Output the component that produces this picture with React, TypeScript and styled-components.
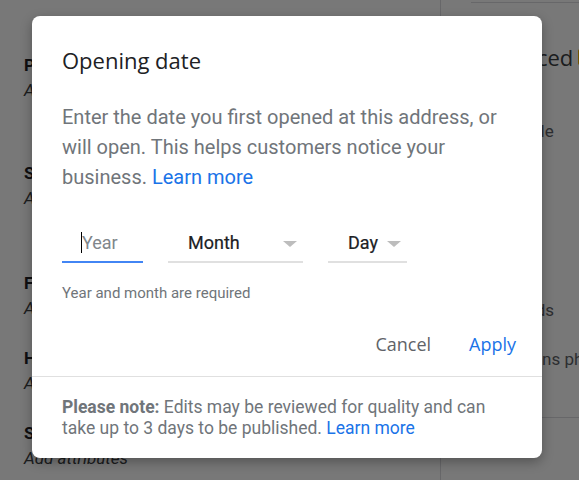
import React from 'react'
import styled, { createGlobalStyle } from 'styled-components'

const BLUE = '#1a73e8'
const GREY_TEXT = '#70757a'
const DARK = '#202124'
const LINE = '#e0e0e0'

const GlobalStyle = createGlobalStyle`
  html, body {
    margin: 0;
    padding: 0;
    background: #fff;
  }
  body {
    font-family: Roboto, "Liberation Sans", sans-serif;
  }
`

const Page = styled.div`
  position: relative;
  width: 579px;
  height: 480px;
  overflow: hidden;
  display: grid;
  grid-template-columns: 440px 1fr;
  background: #fff;
`

const LeftColumn = styled.div`
  padding: 53px 0 0 24px;
`

const Section = styled.div<{ $gap: number }>`
  margin-top: ${({ $gap }) => $gap}px;
  font-size: 17px;
  line-height: 25px;
`

const SectionLabel = styled.div`
  font-weight: 700;
  color: ${DARK};
`

const SectionValue = styled.div`
  font-style: italic;
  color: #3c4043;
`

const RightColumn = styled.div`
  border-left: 1px solid #dadce0;
  display: flex;
  flex-direction: column;
  white-space: nowrap;
  color: #5f6368;
`

const TopRule = styled.div`
  margin: 2px 0 0 30px;
  border-top: 1px solid #dadce0;
`

const PanelHeading = styled.div`
  margin: 39px 0 0 31px;
  font-family: 'Open Sans', sans-serif;
  font-size: 22px;
  line-height: 30px;
  color: #3c4043;
  display: flex;
  align-items: center;
  gap: 5px;
`

const Badge = styled.span`
  width: 8px;
  height: 16px;
  background: #f4b400;
  border-radius: 2px;
`

const PanelItem = styled.div<{ $gap: number; $indent: number }>`
  margin: ${({ $gap }) => $gap}px 0 0 ${({ $indent }) => $indent}px;
  font-size: 17px;
  line-height: 22px;
`

const BottomRule = styled.div`
  margin-top: 47px;
  border-top: 1px solid #dadce0;
`

const Overlay = styled.div`
  position: absolute;
  inset: 0;
  background: rgba(0, 0, 0, 0.53);
`

const Dialog = styled.div`
  position: absolute;
  left: 32px;
  top: 16px;
  width: 510px;
  height: 442px;
  box-sizing: border-box;
  background: #fff;
  border-radius: 8px;
  box-shadow: 0 4px 12px rgba(0, 0, 0, 0.3);
  display: flex;
  flex-direction: column;
  overflow: hidden;
`

const Body = styled.div`
  padding: 30px 30px 0;
`

const Title = styled.h2`
  margin: 0;
  font-family: 'Open Sans', sans-serif;
  font-weight: 400;
  font-size: 22px;
  line-height: 28px;
  color: ${DARK};
`

const Description = styled.p`
  margin: 28px 0 0;
  font-size: 20px;
  line-height: 30px;
  color: ${GREY_TEXT};
`

const Link = styled.a`
  color: ${BLUE};
  text-decoration: none;
`

const Fields = styled.div`
  margin-top: 31px;
  display: flex;
  gap: 25px;
`

const Field = styled.div<{ $width: number; $active?: boolean }>`
  width: ${({ $width }) => $width}px;
  height: 40px;
  box-sizing: border-box;
  padding: 0 6px 0 20px;
  display: flex;
  align-items: center;
  justify-content: space-between;
  border-bottom: 2px solid ${({ $active }) => ($active ? '#4285f4' : LINE)};
  font-size: 18px;
  color: ${DARK};
`

const Placeholder = styled.span`
  color: #80868b;
  border-left: 1px solid #000;
  margin-left: -1px;
  line-height: 21px;
`

const SelectText = styled.span`
  font-weight: 400;
  color: #202124;
  -webkit-text-stroke: 0.2px #202124;
`

const Arrow = styled.span`
  width: 0;
  height: 0;
  border-left: 7px solid transparent;
  border-right: 7px solid transparent;
  border-top: 6px solid #bdbdbd;
  margin-top: 3px;
`

const Helper = styled.div`
  margin-top: 20px;
  font-size: 15px;
  line-height: 20px;
  color: ${GREY_TEXT};
`

const Actions = styled.div`
  display: flex;
  justify-content: flex-end;
  gap: 22px;
  padding: 23px 18px 14px 0;
`

const Button = styled.button<{ $primary?: boolean }>`
  height: 36px;
  padding: 0 8px;
  border: none;
  background: none;
  font-family: 'Open Sans', sans-serif;
  font-size: 18px;
  font-weight: 500;
  color: ${({ $primary }) => ($primary ? BLUE : '#5f6368')};
  cursor: pointer;
`

const Footer = styled.div`
  border-top: 1px solid ${LINE};
  padding: 20px 30px 0;
  font-size: 17.5px;
  line-height: 21px;
  color: ${GREY_TEXT};

  strong {
    font-weight: 700;
  }
`

const sections = [
  { label: 'Phone', value: 'Add phone', gap: 0 },
  { label: 'Services', value: 'Add services', gap: 58 },
  { label: 'From the business', value: 'Add description', gap: 60 },
  { label: 'Hours', value: 'Add hours', gap: 25 },
  { label: 'Service options', value: 'Add attributes', gap: 25 },
]

const App: React.FC = () => {
  return (
    <>
      <GlobalStyle />
      <Page>
        <LeftColumn>
          {sections.map((s) => (
            <Section key={s.label} $gap={s.gap}>
              <SectionLabel>{s.label}</SectionLabel>
              <SectionValue>{s.value}</SectionValue>
            </Section>
          ))}
        </LeftColumn>
        <RightColumn>
          <TopRule />
          <PanelHeading>
            Enhanced
            <Badge />
          </PanelHeading>
          <PanelItem $gap={48} $indent={52}>
            Editable
          </PanelItem>
          <PanelItem $gap={157} $indent={68}>
            Fields
          </PanelItem>
          <PanelItem $gap={27} $indent={52}>
            Contains photos
          </PanelItem>
          <BottomRule />
        </RightColumn>

        <Overlay>
          <Dialog>
            <Body>
              <Title>Opening date</Title>
              <Description>
                Enter the date you first opened at this address, or will open. This helps customers notice your
                business. <Link href="#">Learn more</Link>
              </Description>
              <Fields>
                <Field $width={81} $active>
                  <Placeholder>Year</Placeholder>
                </Field>
                <Field $width={135}>
                  <SelectText>Month</SelectText>
                  <Arrow />
                </Field>
                <Field $width={79}>
                  <SelectText>Day</SelectText>
                  <Arrow />
                </Field>
              </Fields>
              <Helper>Year and month are required</Helper>
            </Body>
            <Actions>
              <Button>Cancel</Button>
              <Button $primary>Apply</Button>
            </Actions>
            <Footer>
              <strong>Please note:</strong> Edits may be reviewed for quality and can take up to 3 days to be
              published. <Link href="#">Learn more</Link>
            </Footer>
          </Dialog>
        </Overlay>
      </Page>
    </>
  )
}

export default App
